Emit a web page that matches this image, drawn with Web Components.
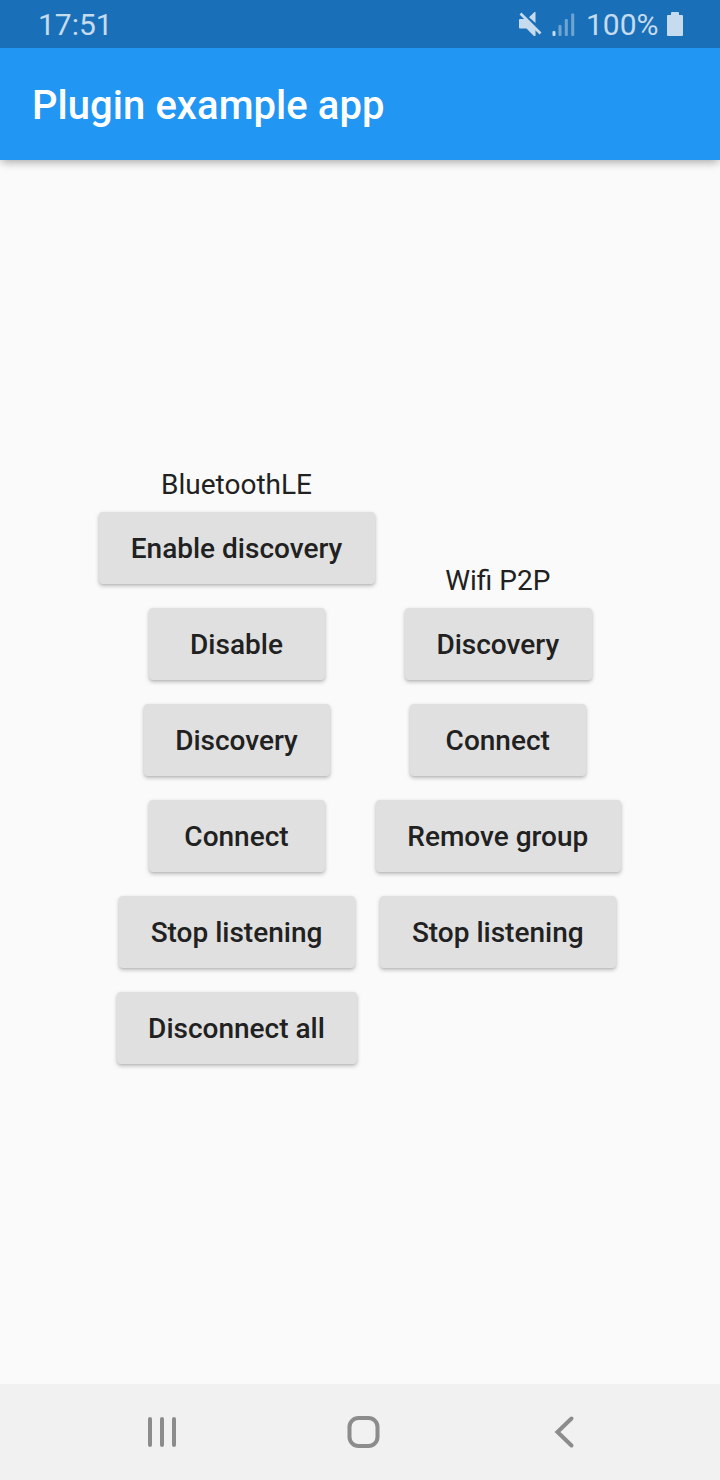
<!DOCTYPE html>
<html lang="en">
<head>
<meta charset="utf-8">
<title>Plugin example app</title>
<style>
html,body{margin:0;height:100%;background:#fafafa}
body{font-family:Roboto,"Liberation Sans",sans-serif;color:#212121;overflow:hidden}
</style>
</head>
<body>
<phone-screen>
  <status-bar slot="top" time="17:51" battery="100%"></status-bar>
  <app-bar slot="top">Plugin example app</app-bar>
  <button-column label="BluetoothLE">
    <raised-button>Enable discovery</raised-button>
    <raised-button>Disable</raised-button>
    <raised-button>Discovery</raised-button>
    <raised-button>Connect</raised-button>
    <raised-button>Stop listening</raised-button>
    <raised-button>Disconnect all</raised-button>
  </button-column>
  <button-column label="Wifi P2P">
    <raised-button>Discovery</raised-button>
    <raised-button>Connect</raised-button>
    <raised-button>Remove group</raised-button>
    <raised-button>Stop listening</raised-button>
  </button-column>
  <nav-bar slot="bottom"></nav-bar>
</phone-screen>
<script>
class Base extends HTMLElement {
  constructor() {
    super();
    this.attachShadow({mode: "open"}).innerHTML = this.render();
  }
}
customElements.define("phone-screen", class extends Base {
  render() {
    return `<style>
      :host{display:flex;flex-direction:column;width:720px;height:1480px;background:#fafafa}
      header{flex:none;z-index:1}
      main{flex:1;display:flex;justify-content:center;align-items:center;gap:1px}
    </style>
    <header><slot name="top"></slot></header>
    <main><slot></slot></main>
    <slot name="bottom"></slot>`;
  }
});
customElements.define("status-bar", class extends Base {
  render() {
    return `<style>
      :host{display:flex;align-items:center;box-sizing:border-box;height:48px;padding:0 36px 0 38px;background:#1a70b8;color:#c6dbed;font-size:30px;line-height:48px}
      .time{flex:1}
      svg{display:block;flex:none}
      .battery{margin:0 8.500px 0 9.500px}
      span{position:relative;top:1px}
    </style>
    <span class="time">${this.getAttribute("time")}</span>
    <svg width="58" height="48" viewBox="0 0 58 48" fill="#c6dbed">
      <path d="M1 20q0-1 1-1h5L17.500 29.500V36H16l-7.500-7.500H2q-1 0-1-1zM11 17.300L16.500 12h1v11z"/>
      <path d="M2.500 13.500L22.500 33.500" stroke="#c6dbed" stroke-width="2.600"/>
      <rect x="34.500" y="31" width="3" height="5" rx="1"/>
      <g opacity=".5"><rect x="40.500" y="25" width="3" height="11" rx="1"/><rect x="46.800" y="19" width="3" height="17" rx="1"/><rect x="53.200" y="13.500" width="3" height="22.500" rx="1"/></g>
    </svg>
    <span class="battery">${this.getAttribute("battery")}</span>
    <svg width="17" height="48" viewBox="0 0 17 48" fill="#c6dbed"><path d="M4 13q0-1 1-1h6q1 0 1 1v2h3q1 0 1 1V35q0 1-1 1H1q-1 0-1-1V16q0-1 1-1h3z"/></svg>`;
  }
});
customElements.define("app-bar", class extends Base {
  render() {
    return `<style>
      :host{display:flex;align-items:center;box-sizing:border-box;height:112px;padding:2px 32px 0;background:#2196f3;color:#fff;font-size:40px;font-weight:500;letter-spacing:.05px;box-shadow:0 4px 8px -2px rgba(0,0,0,.2),0 2px 10px rgba(0,0,0,.16);clip-path:inset(0 0 -24px 0)}
    </style><slot></slot>`;
  }
});
customElements.define("button-column", class extends Base {
  render() {
    return `<style>
      :host{display:flex;flex-direction:column;align-items:center}
      div{height:32px;line-height:33px;font-size:28px;padding-right:1px}
    </style><div>${this.getAttribute("label")}</div><slot></slot>`;
  }
});
customElements.define("raised-button", class extends Base {
  render() {
    return `<style>
      :host{display:block;padding:12px 0}
      button{display:block;box-sizing:border-box;min-width:176px;height:72px;padding:1px 32.500px 0 31.500px;border:0;border-radius:4px;background:#e0e0e0;color:#212121;font:500 28px/71px Roboto,"Liberation Sans",sans-serif;white-space:nowrap;box-shadow:0 2px 4px rgba(0,0,0,.24),0 1px 2px rgba(0,0,0,.08)}
    </style><button><slot></slot></button>`;
  }
});
customElements.define("nav-bar", class extends Base {
  render() {
    return `<style>
      :host{display:flex;justify-content:space-between;align-items:center;box-sizing:border-box;height:96px;flex:none;padding:0 137px 0 144px;background:#f1f1f1}
      svg{display:block}
    </style>
    <svg width="36" height="36" viewBox="0 0 36 36" fill="none" stroke="#8c8c8c" stroke-width="4" stroke-linecap="round"><path d="M6 5v26M18 5v26M30 5v26"/></svg>
    <svg width="36" height="36" viewBox="0 0 36 36" fill="none" stroke="#8c8c8c" stroke-width="4"><rect x="3.500" y="4" width="28" height="28" rx="9"/></svg>
    <svg width="36" height="36" viewBox="0 0 36 36" fill="none" stroke="#8c8c8c" stroke-width="4" stroke-linecap="round"><path d="M24.500 4.500L10.500 18l14 13.500"/></svg>`;
  }
});
</script>
</body>
</html>
